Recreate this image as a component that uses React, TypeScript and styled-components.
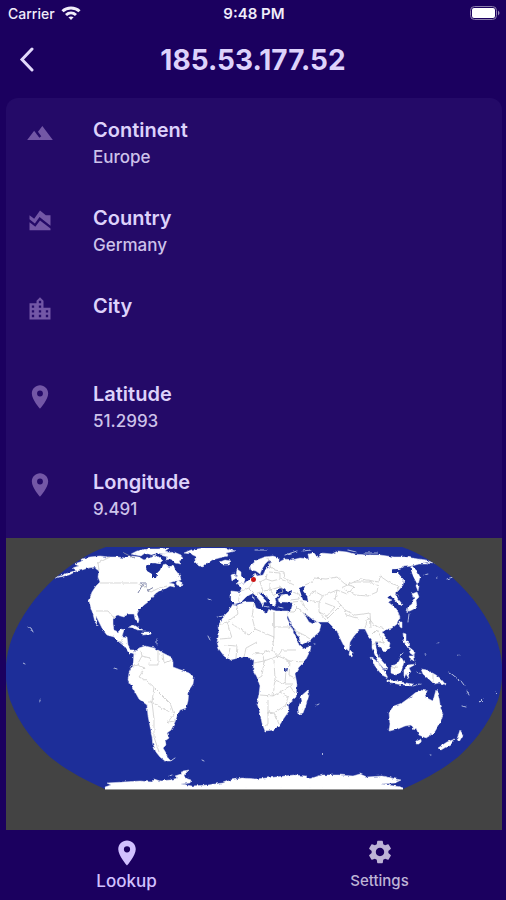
import React from "react";
import styled, { createGlobalStyle } from "styled-components";
import type { IconType } from "react-icons";
import {
  MdAreaChart,
  MdLocationCity,
  MdLocationOn,
  MdSettings,
  MdTerrain,
} from "react-icons/md";

const GlobalStyle = createGlobalStyle`
  * { box-sizing: border-box; }
  body {
    margin: 0;
    background: #1b005f;
    color: #ddd2fb;
    font-family: Inter, "Liberation Sans", sans-serif;
  }
`;

const Screen = styled.div`
  display: flex;
  flex-direction: column;
  min-height: 100vh;
`;

const StatusBar = styled.div`
  display: grid;
  grid-template-columns: 1fr auto 1fr;
  align-items: center;
  height: 26px;
  padding: 0 6px 0 8px;
  color: #f0ecfa;
  font-size: 14px;
  font-weight: 500;
`;

const Carrier = styled.span`
  display: flex;
  align-items: center;
  gap: 6px;
`;

const Clock = styled.time`
  font-size: 15px;
  font-weight: 600;
`;

const Battery = styled.svg`
  justify-self: end;
`;

const Header = styled.header`
  display: grid;
  grid-template-columns: 48px 1fr 48px;
  align-items: center;
  height: 72px;
  padding: 0 3px 4px;
`;

const BackButton = styled.button`
  display: flex;
  align-items: center;
  justify-content: center;
  height: 48px;
  padding: 0;
  border: 0;
  background: none;
  color: #e2d9fb;
  cursor: pointer;
`;

const Title = styled.h1`
  margin: 0;
  font-size: 28px;
  font-weight: 700;
  line-height: 32px;
  text-align: center;
`;

const Card = styled.main`
  flex: 1;
  display: flex;
  flex-direction: column;
  margin: 0 4px 0 6px;
  border-radius: 12px 12px 0 0;
  background: #240a68;
  overflow: hidden;
`;

const Details = styled.dl`
  margin: 0;
`;

const DetailRow = styled.div`
  display: grid;
  grid-template-columns: 67px 1fr;
  grid-template-rows: 26px 26px;
  height: 88px;
  padding: 20px 20px 0;
`;

const DetailIcon = styled.span`
  grid-row: 1 / 3;
  padding-top: 1px;
  color: #7357a6;
  line-height: 0;
`;

const DetailLabel = styled.dt`
  grid-column: 2;
  font-size: 20px;
  font-weight: 600;
  line-height: 24px;
`;

const DetailValue = styled.dd`
  grid-column: 2;
  margin: 0;
  color: #cdc2ea;
  font-size: 17px;
  font-weight: 500;
  line-height: 26px;
`;

const MapPanel = styled.figure`
  flex: 1;
  margin: 0;
  padding: 8px 0 32px;
  background: #434343;
`;

const MapDrawing = styled.svg`
  display: block;
  width: 100%;
`;

const TabBar = styled.nav`
  display: grid;
  grid-template-columns: 1fr 1fr;
  height: 70px;
`;

const Tab = styled.a<{ $active?: boolean }>`
  display: flex;
  flex-direction: column;
  align-items: center;
  padding-top: 8px;
  color: ${(p) => (p.$active ? "#d1c0ff" : "#beb3d6")};
  font-size: ${(p) => (p.$active ? 17 : 15)}px;
  font-weight: 500;
  line-height: 26px;
  text-decoration: none;
`;

const TabIcon = styled.span`
  height: 30px;
`;

const details: { label: string; value: string; Icon: IconType }[] = [
  { label: "Continent", value: "Europe", Icon: MdTerrain },
  { label: "Country", value: "Germany", Icon: MdAreaChart },
  { label: "City", value: "", Icon: MdLocationCity },
  { label: "Latitude", value: "51.2993", Icon: MdLocationOn },
  { label: "Longitude", value: "9.491", Icon: MdLocationOn },
];

const globe =
  "M106 547H402C420 553 438 565 453 578C473 596 488 618 496 638C504 660 504 680 498 700C488 727 470 746 458 757C443 769 426 779 403 789H105C82 779 65 769 50 757C38 746 20 727 10 700C4 680 4 660 12 638C20 618 35 596 55 578C70 565 88 553 106 547Z";

const land = [
  // North and Central America
  "M55 578L65 574L77 570L72 568L79 566L74 564L83 561L82 559L90 557L100 556L109 557L118 557L125 558L132 556L139 557L144 560L149 558L154 555L159 557L163 561L160 564L155 563L150 564L146 567L148 571L152 573L153 578L155 578L157 573L160 570L162 565L166 564L169 568L173 565L176 571L180 576L181 580L175 581L169 583L174 584L175 587L170 586L165 589L159 591L155 594L151 599L148 602L144 605L139 610L137 614L139 620L138 623L135 619L134 614L128 614L124 617L117 615L113 619L113 624L114 630L118 632L121 629L124 630L122 636L127 637L128 645L131 650L134 650L136 655L132 653L129 653L124 646L119 642L114 637L107 635L103 630L99 622L96 616L96 621L98 626L95 622L93 614L91 608L89 601L92 592L96 586L100 582L98 577L99 570L95 567L88 568L82 570L77 571L69 575Z",
  "M131 554L137 551L147 549L158 549L169 548L165 551L169 552L164 554L156 553L151 555L145 553L141 556Z",
  "M160 555L166 553L174 552L181 555L183 559L179 561L181 564L175 563L171 559L165 560L168 557Z",
  "M176 583L178 580L182 583L181 586L177 585Z",
  "M191 550L204 548L225 548L235 551L226 553L228 556L219 558L212 560L206 564L203 567L198 565L194 561L197 557L191 554L184 553Z",
  "M220 562L225 560L231 561L228 564L222 564Z",
  "M128 627L134 625L142 630L138 630L133 628Z",
  "M142 632L150 632L152 634L143 635Z",
  // South America
  "M134 653L139 648L145 646L154 648L158 650L163 653L171 657L173 662L173 667L181 670L189 673L194 677L193 684L189 690L188 701L186 708L180 710L177 716L175 722L171 730L167 733L169 738L165 741L166 745L163 748L166 753L168 758L171 761L165 761L160 757L156 752L153 745L152 737L150 726L148 716L147 705L139 699L134 690L128 680L129 673L133 665Z",
  // Africa
  "M233 604L237 605L246 602L254 602L256 608L263 611L267 613L269 609L276 611L284 611L288 611L287 618L291 627L296 637L299 645L303 649L311 646L310 651L305 661L299 667L295 674L297 684L296 697L288 704L289 711L284 718L279 726L273 730L265 731L262 723L260 713L257 703L259 694L260 686L257 677L253 670L254 661L250 658L244 657L238 658L230 660L224 656L219 649L217 642L219 634L218 626L224 616L229 611Z",
  "M308 690L309 695L306 705L303 713L299 714L298 708L301 701L300 697Z",
  // Europe and Asia
  "M231 591L240 592L242 587L238 584L246 583L251 578L254 576L255 573L257 576L263 575L266 569L270 567L267 566L272 562L269 560L265 564L262 569L260 574L256 571L251 570L250 566L257 560L265 557L273 556L279 558L279 562L285 559L292 560L300 558L309 559L308 554L314 553L318 558L322 553L332 554L338 551L347 552L354 554L366 555L380 555L394 557L406 557L418 559L426 560L434 563L424 562L428 564L419 564L412 566L417 571L420 577L418 585L413 578L408 571L412 566L403 567L401 569L392 569L392 573L398 573L404 580L403 585L399 590L395 594L398 599L403 605L400 606L394 599L390 595L387 598L392 600L388 602L393 606L398 612L400 617L397 624L392 628L386 630L382 632L386 638L390 643L389 648L384 652L378 645L375 641L377 652L382 661L388 668L385 670L379 663L375 655L372 648L372 640L368 635L365 629L360 629L354 636L350 642L349 651L345 648L340 638L337 631L332 626L328 622L318 622L312 619L307 615L303 613L306 617L309 622L313 624L317 621L321 625L319 632L310 640L301 645L299 637L294 629L290 621L287 614L291 610L293 603L286 602L279 602L278 598L283 595L278 595L275 598L276 603L274 607L270 603L267 596L261 592L260 595L267 602L264 602L263 606L260 601L256 596L253 593L246 597L241 602L235 604L231 600Z",
  "M237 569L241 572L241 576L245 580L244 583L236 584L239 581L236 577Z",
  "M231 575L235 574L236 578L232 581Z",
  "M350 650L353 653L352 657L349 655Z",
  // Pacific rim and Oceania
  "M407 613L408 607L412 604L414 598L412 594L417 592L419 597L416 600L417 607L412 610L408 611Z",
  "M415 580L419 586L418 591L416 586Z",
  "M399 622L402 622L402 628L400 627Z",
  "M403 633L406 634L406 641L410 645L408 648L404 642Z",
  "M409 647L415 652L414 656L410 653Z M408 656L414 656L415 661L410 659Z",
  "M371 657L378 662L385 672L388 678L382 675L375 666Z",
  "M387 680L396 681L406 683L413 684L412 686L397 684L387 682Z",
  "M391 667L398 663L401 657L404 662L401 672L396 675L391 673Z",
  "M404 669L408 665L416 664L409 668L411 672L408 673L409 679L406 674L404 678Z",
  "M421 669L427 670L436 675L441 679L446 685L440 683L434 684L430 680L423 674Z",
  "M389 712L394 706L402 703L409 698L415 693L420 690L427 691L425 697L433 701L436 690L439 698L441 710L443 714L440 723L434 733L426 738L419 735L416 728L414 730L411 725L405 726L398 729L389 731L390 724Z",
  "M417 741L422 739L419 744L416 744Z",
  "M438 748L447 742L455 739L451 744L441 750Z M457 739L460 730L463 735L459 742Z",
  // Antarctica
  "M105 787L111 785L107 783L124 782L140 781L151 782L154 779L160 781L170 780L178 778L175 776L181 774L183 771L189 770L184 775L185 778L191 780L190 783L181 784L192 786L207 785L223 783L231 780L242 778L256 779L276 777L294 775L306 776L309 779L322 775L339 775L353 776L360 774L367 777L382 776L391 778L401 780L395 783L381 784L401 787L402 789H106Z",
].join("");

const inlandSeas = [
  // Black Sea
  "M276 592L280 588L284 589L288 592L292 590L291 595L286 594L280 595L276 595Z",
  // Caspian Sea
  "M299 588L305 586L303 591L307 596L308 601L303 600L301 594Z",
  // Lake Victoria
  "M284 669L288 668L287 672L284 671Z",
  // Hudson Bay
  "M146 567L151 563L157 564L162 564L160 570L157 573L156 578L152 578L152 574L147 571Z",
  // Sea of Okhotsk
  "M392 570L402 568L410 567L413 576L417 584L412 589L405 585L404 579L398 573L392 573Z",
].join("");

const lakes = "M140 583L146 583L146 588M143 584L138 593M147 591L154 587M122 552L134 558";

const borders =
  "M100 583L137 583M137 583L143 586L151 592L159 588L167 586M110 557L98 563L99 570M96 611L108 611L114 618M119 642L124 638M140 648L142 656L137 665L130 667M142 656L150 658L149 665L158 665L158 650M163 654L164 663L171 660M137 665L145 668L139 677L147 681L154 687L152 702L148 702M154 687L164 697L170 703L174 714L166 710L158 706L152 702L154 719L154 737L159 752M174 714L168 722L175 721M237 605L238 614L227 622L218 625M227 622L232 638L220 639M232 624L249 635L255 629L252 617L254 603M255 629L274 637L274 612M274 637L272 650L262 653L252 654M274 612L274 627L292 627M262 653L264 661L254 663M244 657L246 648L257 642M236 658L237 646L224 645M228 658L230 648M264 661L278 656L290 661L289 675L295 678M278 656L282 650L296 650M272 650L278 657M290 661L304 662M264 661L262 676L257 679M274 659L275 680L285 684L286 669M260 695L273 696L275 680M273 696L280 692L288 697L286 705L274 713L268 712L268 724L265 726M280 692L290 686L294 692M268 700L268 714M274 713L279 724M285 684L293 684M238 602L240 594M241 591L249 588L255 594L263 591L260 582L266 579L272 581L280 579L280 573L269 572M264 591L270 590L274 595L283 592L280 587L270 590L270 583M249 588L253 582M266 579L267 574M270 567L275 570L284 572L285 579L291 581M280 579L288 582L294 585M271 568L268 558M293 592L300 595L299 599L290 600M293 602L302 601L307 611M293 603L298 608L294 612L288 612M298 608L308 617M310 639L304 635L294 630M308 600L319 602L323 596L314 591L309 595M319 602L319 612L326 620M319 612L327 616L335 607L325 603M305 585L312 582L314 578L326 579L337 577L345 584L355 587M355 587L347 594L337 590L323 596M337 590L335 600L341 605L334 612L326 620M341 605L345 610L355 615L363 614L370 613L371 628M341 588L354 582L370 582L378 586L377 592L368 596L355 595L344 589M354 582L361 579L379 582L380 576L390 583L399 586L396 594M345 610L346 615L358 618M365 628L368 617L374 625L384 629M372 635L377 630L382 639L385 645M372 645L378 642L385 643M396 594L400 597M391 668L398 667M433 674L433 683";

const islands =
  "M28 627L31 628L33 632M23 663L25 664M40 700L40 701M114 668L117 669M157 639L157 644M208 599L211 600M217 617L224 616M208 636L210 640M169 776L172 775M172 760L175 758M202 760L204 761M255 550L267 550M285 555L297 551M303 551L311 550M364 553L377 553M348 550L356 552M424 575L428 574M436 578L437 578M447 579L453 577M409 614L408 622M437 643L438 643M425 654L426 654M458 655L459 655M417 672L421 674M413 686L420 684M449 672L453 675L459 680M461 681L464 685M467 691L469 695M462 706L466 707M480 702L483 699M496 692L498 694M315 706L319 704M322 753L323 754M314 644L315 644M264 606L268 607M278 607L283 608M253 595L254 600M430 755L431 755M120 642L123 644M403 653L400 656";

const WifiIcon = () => (
  <svg width="20" height="15" viewBox="0 0 20 15" fill="none" stroke="currentColor" strokeWidth="3" aria-hidden="true">
    <path d="M1.5 5.3C6 0.9 14 0.9 18.5 5.3M5 9C8 6.3 12 6.3 15 9" />
    <path d="M7.4 11.3Q10 9.6 12.6 11.3L10 14Z" fill="currentColor" stroke="none" />
  </svg>
);

const BatteryIcon = () => (
  <Battery width="30" height="14" viewBox="0 0 30 14" aria-hidden="true">
    <rect x="0.5" y="0.5" width="26" height="13" rx="4" fill="none" stroke="#8c7ead" />
    <rect x="2" y="2" width="23" height="10" rx="2" fill="#fff" />
    <path d="M28 4.5Q31 7 28 9.5Z" fill="#9b8eb8" />
  </Battery>
);

const WorldMap = () => (
  <MapPanel>
    <MapDrawing viewBox="6 546 496 245" role="img" aria-label="World map with the looked-up location marked in Germany">
      <defs>
        <filter id="coastline" x="0" y="0" width="1" height="1">
          <feTurbulence type="fractalNoise" baseFrequency="0.25" numOctaves="2" seed="4" />
          <feDisplacementMap in="SourceGraphic" scale="3" xChannelSelector="R" yChannelSelector="G" />
        </filter>
        <clipPath id="globe">
          <path d={globe} />
        </clipPath>
      </defs>
      <path d={globe} fill="#1d2e99" />
      <g clipPath="url(#globe)">
        <g filter="url(#coastline)">
          <path d={land} fill="#fff" stroke="#e2e5f2" strokeWidth="0.5" strokeLinejoin="round" />
          <path d={inlandSeas} fill="#1d2e99" />
          <path d={borders} fill="none" stroke="#c4c4c4" strokeWidth="0.7" strokeLinejoin="round" />
          <path d={lakes} fill="none" stroke="#7e84a8" strokeWidth="1" />
          <path d={islands} fill="none" stroke="#aeb8dd" strokeWidth="1" strokeLinecap="round" />
        </g>
      </g>
      <path d="M105 788.5H403" stroke="#fff" strokeWidth="2" />
      <path d="M105 789.5H403" stroke="#999" />
      <circle cx="253.5" cy="579.5" r="2.5" fill="#cb1515" />
    </MapDrawing>
  </MapPanel>
);

export default function App() {
  return (
    <>
      <GlobalStyle />
      <Screen>
        <StatusBar>
          <Carrier>
            Carrier
            <WifiIcon />
          </Carrier>
          <Clock>9:48 PM</Clock>
          <BatteryIcon />
        </StatusBar>
        <Header>
          <BackButton type="button" aria-label="Back">
            <svg width="16" height="26" viewBox="0 0 16 26" fill="none" stroke="currentColor" strokeWidth="3" strokeLinecap="round">
              <path d="M13 2L3 12.5L13 23" />
            </svg>
          </BackButton>
          <Title>185.53.177.52</Title>
        </Header>
        <Card>
          <Details>
            {details.map(({ label, value, Icon }) => (
              <DetailRow key={label}>
                <DetailIcon>
                  <Icon size={28} aria-hidden="true" />
                </DetailIcon>
                <DetailLabel>{label}</DetailLabel>
                <DetailValue>{value}</DetailValue>
              </DetailRow>
            ))}
          </Details>
          <WorldMap />
        </Card>
        <TabBar>
          <Tab href="#lookup" $active aria-current="page">
            <TabIcon>
              <MdLocationOn size={30} aria-hidden="true" />
            </TabIcon>
            Lookup
          </Tab>
          <Tab href="#settings">
            <TabIcon>
              <MdSettings size={28} aria-hidden="true" />
            </TabIcon>
            Settings
          </Tab>
        </TabBar>
      </Screen>
    </>
  );
}
